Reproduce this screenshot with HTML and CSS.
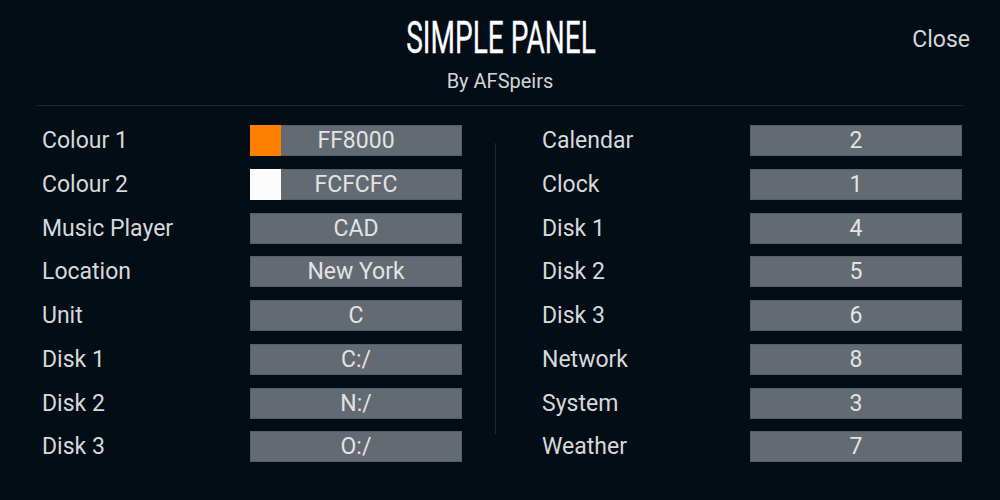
FILE: index.html
```html
<!DOCTYPE html>
<html>
<head>
<meta charset="utf-8">
<link rel="stylesheet" href="styles.css">
</head>
<body>
<div class="panel">
  <header class="header">
    <div class="spacer"></div>
    <div class="heading">
      <h1 class="title"><span class="title-text">SIMPLE PANEL</span></h1>
      <div class="byline">By AFSpeirs</div>
    </div>
    <div class="close">Close</div>
  </header>
  <div class="rule"></div>
  <main class="columns">
    <section class="col">
      <div class="row"><span class="label">Colour 1</span><span class="field"><span class="swatch swatch-orange"></span>FF8000</span></div>
      <div class="row"><span class="label">Colour 2</span><span class="field"><span class="swatch swatch-white"></span>FCFCFC</span></div>
      <div class="row"><span class="label">Music Player</span><span class="field">CAD</span></div>
      <div class="row"><span class="label">Location</span><span class="field">New York</span></div>
      <div class="row"><span class="label">Unit</span><span class="field">C</span></div>
      <div class="row"><span class="label">Disk 1</span><span class="field">C:/</span></div>
      <div class="row"><span class="label">Disk 2</span><span class="field">N:/</span></div>
      <div class="row"><span class="label">Disk 3</span><span class="field">O:/</span></div>
    </section>
    <div class="divider"></div>
    <section class="col">
      <div class="row"><span class="label">Calendar</span><span class="field">2</span></div>
      <div class="row"><span class="label">Clock</span><span class="field">1</span></div>
      <div class="row"><span class="label">Disk 1</span><span class="field">4</span></div>
      <div class="row"><span class="label">Disk 2</span><span class="field">5</span></div>
      <div class="row"><span class="label">Disk 3</span><span class="field">6</span></div>
      <div class="row"><span class="label">Network</span><span class="field">8</span></div>
      <div class="row"><span class="label">System</span><span class="field">3</span></div>
      <div class="row"><span class="label">Weather</span><span class="field">7</span></div>
    </section>
  </main>
</div>
</body>
</html>
```

FILE: styles.css
```css
html, body {
  margin: 0;
  padding: 0;
  background: #020d16;
}
body {
  width: 1000px;
  height: 500px;
  overflow: hidden;
  font-family: Roboto, "Liberation Sans", sans-serif;
  color: #d9dadb;
}
.panel {
  padding: 0 37px;
}
.header {
  display: grid;
  grid-template-columns: 1fr auto 1fr;
  height: 105px;
}
.heading {
  display: flex;
  flex-direction: column;
  align-items: center;
  padding-top: 17px;
}
.title {
  margin: 0;
  font-weight: 400;
  font-size: 43.5px;
  line-height: 44px;
  color: #ffffff;
  height: 44px;
  display: flex;
  justify-content: center;
  width: 200px;
  padding-left: 2px;
}
.title-text {
  display: inline-block;
  transform: scaleX(0.645);
  white-space: nowrap;
  -webkit-text-stroke: 0.3px #ffffff;
}
.byline {
  margin-top: 9px;
  font-size: 20px;
  line-height: 22px;
  color: #d3d4d5;
}
.close {
  justify-self: end;
  padding-top: 26px;
  padding-right: 30px;
  margin-right: -37px;
  font-size: 23px;
  line-height: 27px;
  color: #d5d6d7;
}
.rule {
  height: 1px;
  background: #1d2630;
}
.columns {
  display: flex;
  padding-top: 19px;
  padding-left: 5px;
}
.col {
  width: 420px;
  display: flex;
  flex-direction: column;
  gap: 12.75px;
}
.row {
  display: flex;
  align-items: center;
  height: 31px;
}
.label {
  width: 208px;
  font-size: 23px;
  line-height: 29px;
  color: #d7d8d9;
}
.field {
  position: relative;
  box-sizing: border-box;
  width: 212px;
  height: 31px;
  background: #636a71;
  border: 1px solid #575e65;
  text-align: center;
  font-size: 23px;
  line-height: 29px;
  color: #e2e3e4;
}
.swatch {
  position: absolute;
  left: -1px;
  top: -1px;
  width: 31px;
  height: 31px;
}
.swatch-orange { background: #ff8000; }
.swatch-white { background: #fcfcfc; }
.divider {
  width: 1px;
  height: 291px;
  margin-top: 18px;
  margin-left: 33px;
  margin-right: 46px;
  background: #1e2730;
}
```
